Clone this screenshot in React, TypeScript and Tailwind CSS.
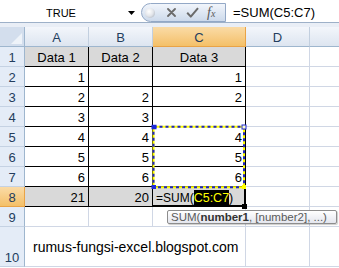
import React from 'react';

const COLS = [
  { name: 'A', w: 'w-[64px]' },
  { name: 'B', w: 'w-[64px]' },
  { name: 'C', w: 'w-[93px]' },
  { name: 'D', w: 'w-[64px]' },
  { name: '', w: 'w-[64px]' }, // E, its letter falls outside the window
];

// rows 1..8, columns A..C
const DATA: string[][] = [
  ['Data 1', 'Data 2', 'Data 3'],
  ['1', '', '1'],
  ['2', '2', '2'],
  ['3', '3', ''],
  ['4', '4', '4'],
  ['5', '5', '5'],
  ['6', '6', '6'],
  ['21', '20', ''],
];

function FormulaBar() {
  return (
    <div className="flex h-[23px] bg-white border-b border-[#9db0c8]">
      {/* name box */}
      <div className="w-[141px] shrink-0 flex items-center pt-[3px]">
        <span className="w-[122px] text-center text-[11px] leading-[14px]">TRUE</span>
        <svg width="7" height="4" viewBox="0 0 7 4" className="ml-[6px]">
          <path d="M0 0H7L3.5 4Z" fill="#000" />
        </svg>
      </div>

      {/* cancel / enter / insert function */}
      <div className="w-[85px] shrink-0 mt-[3px] h-[19px] flex items-center rounded-l-[10px] border border-[#93a8c6] bg-linear-to-b from-[#f1f5fb] to-[#cddaeb]">
        <div className="ml-[3px] w-[10px] h-[10px] rounded-full bg-radial-[at_40%_35%] from-white via-[#e2e5ea] to-[#9ba4b0]" />
        <svg width="9" height="9" viewBox="0 0 9 9" className="ml-[12px]">
          <path d="M1 1L8 8M8 1L1 8" stroke="#6b6b6b" strokeWidth="1.8" strokeLinecap="round" />
        </svg>
        <svg width="13" height="11" viewBox="0 0 13 11" className="ml-[10px]">
          <path d="M1.2 5.8L4.8 9.6L12 1.2" fill="none" stroke="#6b6b6b" strokeWidth="2" strokeLinejoin="round" />
        </svg>
        <span className="ml-[8px] font-['Liberation_Serif',serif] italic text-[14px] leading-none text-[#5a5a5a]">
          f<span className="text-[10px]">x</span>
        </span>
      </div>

      {/* formula */}
      <div className="flex-1 flex items-center pl-[7px] pt-[3px] text-[13px] leading-[16px] whitespace-nowrap">
        =SUM(C5:C7)
      </div>
    </div>
  );
}

function RowHead({ n, active }: { n: number; active?: boolean }) {
  return (
    <div
      className={`w-[25px] shrink-0 flex items-end justify-center leading-[16px] border-r border-b text-[#233d5d] ${
        active
          ? 'bg-linear-to-b from-[#fadba6] to-[#f4c067] border-r-[#e9a346] border-b-[#e9a346]'
          : 'bg-[#e4ecf7] border-r-[#9eb6ce] border-b-[#c5d2e3]'
      }`}
    >
      {n}
    </div>
  );
}

function EditCell() {
  return (
    <div className="w-[93px] shrink-0 relative flex items-end border-r border-b border-black bg-[#d9d9d9] text-[12px] leading-[16px] pl-[3px] whitespace-nowrap">
      <span>=SUM(</span>
      <span className="bg-black text-[#ffff00] text-[12.5px]">C5:C7</span>
      <span className="text-[12.5px]">)</span>
      <div className="absolute -inset-px border-r-2 border-b-2 border-black pointer-events-none" />
      <div className="absolute -right-[2px] -bottom-[3px] w-[5px] h-[5px] bg-black" />
    </div>
  );
}

function Sheet() {
  return (
    <div className="relative text-[13px]">
      {/* column headers */}
      <div className="flex h-[20px]">
        <div className="w-[25px] shrink-0 flex items-end justify-end pr-[2px] pb-[2px] border-r border-b border-[#9eb6ce] bg-[#d3deed]">
          <div className="w-0 h-0 border-l-[11px] border-l-transparent border-b-[11px] border-b-[#eef3f9]" />
        </div>
        {COLS.map((c, j) => (
          <div
            key={j}
            className={`${c.w} shrink-0 flex items-end justify-center leading-[16px] border-r border-b text-[#233d5d] ${
              c.name === 'C'
                ? 'bg-linear-to-b from-[#fadba6] to-[#f4c067] border-r-[#e9a346] border-b-[#e9a346]'
                : 'bg-linear-to-b from-[#f3f6fb] to-[#dde5f0] border-r-[#c2cfdf] border-b-[#9eb6ce]'
            }`}
          >
            {c.name}
          </div>
        ))}
      </div>

      {/* rows 1 - 8 */}
      {DATA.map((row, i) => {
        const r = i + 1;
        const grey = r === 1 || r === 8;
        return (
          <div key={r} className="flex h-[20px]">
            <RowHead n={r} active={r === 8} />
            {COLS.map((c, j) => {
              if (j < 3) {
                if (r === 8 && j === 2) return <EditCell key={j} />;
                return (
                  <div
                    key={j}
                    className={`${c.w} shrink-0 flex items-end leading-[16px] px-[3px] border-r border-b border-black ${
                      grey ? 'bg-[#d9d9d9]' : ''
                    } ${r === 1 ? 'justify-center' : 'justify-end'}`}
                  >
                    {row[j]}
                  </div>
                );
              }
              return <div key={j} className={`${c.w} shrink-0 border-r border-b border-[#d0d7e5]`} />;
            })}
          </div>
        );
      })}

      {/* row 9 */}
      <div className="flex h-[20px]">
        <RowHead n={9} />
        {COLS.map((c, j) => (
          <div key={j} className={`${c.w} shrink-0 border-r border-b border-[#d0d7e5]`} />
        ))}
      </div>

      {/* row 10 */}
      <div className="flex h-[40px]">
        <RowHead n={10} />
        <div className="w-[221px] shrink-0 flex items-end pl-[8px] pb-[11px] text-[14px] leading-[16px] whitespace-nowrap border-r border-b border-[#d0d7e5]">
          rumus-fungsi-excel.blogspot.com
        </div>
        <div className="w-[64px] shrink-0 border-r border-b border-[#d0d7e5]" />
        <div className="w-[64px] shrink-0 border-r border-b border-[#d0d7e5]" />
      </div>

      {/* copy range marker around C5:C7 */}
      <svg className="absolute left-[150px] top-[97px] pointer-events-none" width="100" height="66" viewBox="0 0 100 66">
        <rect x="3.5" y="2.75" width="90.5" height="60.5" fill="none" stroke="#ffff00" strokeWidth="2" />
        <rect x="3.5" y="2.75" width="90.5" height="60.5" fill="none" stroke="#1e24c4" strokeWidth="2" strokeDasharray="3 3" />
        <rect x="1.5" y="0.75" width="5" height="4.5" fill="#1e2ad8" />
        <rect x="92" y="1" width="4" height="4" fill="#ffffcc" stroke="#1e2ad8" strokeWidth="1" />
        <rect x="1.5" y="61" width="4.5" height="4" fill="#1e2ad8" />
        <rect x="92" y="61" width="4" height="4" fill="#ffff00" />
      </svg>

      {/* function tooltip */}
      <div className="absolute left-[167px] top-[183px] h-[14px] w-[170px] flex items-center pl-[3px] border border-[#8d8d8d] rounded-[2px] bg-linear-to-b from-white to-[#e4e6ee] text-[11.5px] leading-[12px] text-[#5a5a5a] shadow-[1px_1px_1px_rgba(0,0,0,0.2)] whitespace-nowrap">
        SUM(<b className="text-[#333]">number1</b>, [number2], ...)
      </div>
    </div>
  );
}

export default function App() {
  return (
    <div className="w-[339px] h-[268px] overflow-hidden bg-white font-['Liberation_Sans',Arial,sans-serif] text-black">
      <FormulaBar />
      <div className="h-[4px] bg-[#e9eef6]" />
      <Sheet />
    </div>
  );
}
